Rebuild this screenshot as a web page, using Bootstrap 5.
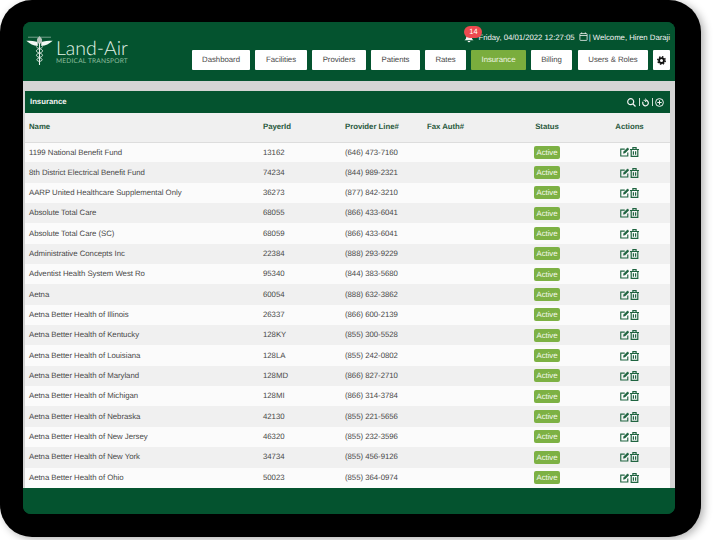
<!DOCTYPE html>
<html lang="en">
<head>
    <meta charset="UTF-8">
    <meta name="viewport" content="width=device-width, initial-scale=1.0">
    <title>Land-Air Insurance</title>
    <link href="https://cdn.jsdelivr.net/npm/bootstrap@5.3.2/dist/css/bootstrap.min.css" rel="stylesheet">
    <style>
        html, body {
            height: 540px;
            overflow: hidden;
            background: #fff;
        }
        body {
            font-family: "Liberation Sans", Arial, sans-serif;
            font-size: 7.8px;
            letter-spacing: -.03px;
            text-rendering: geometricPrecision;
            color: #484848;
        }
        .tablet-frame {
            width: 701px;
            height: 537px;
            padding: 22px 26px 23px 23px;
            background: #000;
            border-radius: 32px;
            box-shadow: 3px 2px 8px rgba(0,0,0,.3);
        }
        .tablet-screen {
            height: 492px;
            border-radius: 8px;
            overflow: hidden;
            background: #04532f;
        }
        .top-head {
            height: 59px;
            padding: 0 5px 0 3px;
            background: #04532f;
        }
        .logo-box {
            width: 165px;
            padding-top: 13px;
        }
        .logo-text {
            margin-left: 3px;
            padding-top: 5px;
        }
        .logo-word {
            font-family: Lato, "Liberation Sans", sans-serif;
            font-weight: 300;
            font-size: 19.5px;
            line-height: 17px;
            letter-spacing: 0;
            color: #e3f5ea;
        }
        .logo-sub {
            font-family: Lato, "Liberation Sans", sans-serif;
            font-size: 6.6px;
            line-height: 8px;
            color: #8fbf9f;
            letter-spacing: .2px;
            white-space: nowrap;
        }
        .head-side {
            width: 478px;
        }
        .head-info {
            height: 28px;
            padding-top: 10px;
            color: #f2f2f2;
            white-space: nowrap;
        }
        .welcome-text {
            margin-left: 1px;
        }
        .bell-wrap {
            width: 14px;
            height: 10px;
            margin-top: 1px;
        }
        .bell-count {
            position: absolute;
            left: 0;
            top: -7px;
            width: 18px;
            height: 12px;
            line-height: 12px;
            border-radius: 6px;
            background: #ec4a4f;
            color: #fff;
            font-size: 7.5px;
            text-align: center;
        }
        .menu-btn {
            height: 20px;
            line-height: 20px;
            padding: 0;
            border: 0;
            border-radius: 1px;
            background: #fff;
            color: #484848;
            text-align: center;
            text-decoration: none;
        }
        .menu-btn.is-current {
            background: #7aad3d;
            color: #eef5e4;
        }
        .work-area {
            height: 407px;
            padding: 10px 5px 0 2px;
            background: #d4d4d4;
            overflow: hidden;
        }
        .panel-bar {
            height: 22px;
            padding: 0 6px 0 5px;
            background: #04532f;
            color: #f2f2f2;
            font-weight: 700;
        }
        .panel-tools {
            gap: 2.5px;
        }
        .tool-sep {
            width: 1px;
            height: 8px;
            background: #cfe0d5;
        }
        .grid-table {
            width: 645px;
            table-layout: fixed;
            margin: 0;
        }
        .grid-table th {
            height: 29px;
            padding: 0 4px;
            background: #f0f0f0;
            color: #2a5a3e;
            font-weight: 700;
            border-bottom: 1px solid #ddd;
        }
        .grid-table td {
            height: 20.35px;
            padding: 0 4px;
            background: #fbfbfb;
            white-space: nowrap;
        }
        .grid-table tr:nth-child(even) td {
            background: #f0f0f0;
        }
        .state-tag {
            display: inline-block;
            width: 26px;
            height: 13px;
            line-height: 13px;
            border-radius: 2px;
            background: #7db144;
            color: #f3f8ea;
            text-align: center;
            vertical-align: middle;
        }
        .row-icons {
            gap: 1px;
        }
        .foot-bar {
            height: 26px;
            background: #04532f;
        }
        svg {
            display: block;
            flex: none;
        }
    </style>
</head>
<body>
<div class="tablet-frame">
    <div class="tablet-screen d-flex flex-column">

        <!-- Header -->
        <header class="top-head d-flex justify-content-between">
            <div class="logo-box d-flex">
                <svg width="27" height="30" viewBox="0 0 30 34" fill="none">
                    <path d="M2 2.500H28" stroke="#d8e6dc" stroke-width=".6"/>
                    <path d="M0 6.500C5 6.500 10 7 13 8V12.500C8 12 4 10 0 6.500Z" fill="#f2f8f4"/>
                    <path d="M30 6.500C25 6.500 20 7 17 8V12.500C22 12 26 10 30 6.500Z" fill="#f2f8f4"/>
                    <path d="M15 1L17.800 4.500V9.500H12.200V4.500Z" fill="#b9c6be"/>
                    <path d="M15 9V34" stroke="#e9f2ec" stroke-width="1.200"/>
                    <path d="M18.500 13C18.500 15.500 11.500 15.500 11.500 18C11.500 20.500 18.500 20.500 18.500 23C18.500 25.500 12 25.500 12 28C12 29.500 15 30 15 30" stroke="#dbe8df" stroke-width="1.100"/>
                    <path d="M11.500 13C11.500 15.500 18.500 15.500 18.500 18C18.500 20.500 11.500 20.500 11.500 23C11.500 25.500 18 25.500 18 28C18 29.500 15 30 15 30" stroke="#dbe8df" stroke-width="1.100"/>
                </svg>
                <div class="logo-text">
                    <div class="logo-word">Land-Air</div>
                    <div class="logo-sub">MEDICAL TRANSPORT</div>
                </div>
            </div>
            <div class="head-side">
                <div class="head-info d-flex justify-content-end align-items-start">
                    <span class="bell-wrap position-relative">
                        <svg width="10" height="10" viewBox="0 0 11 10" fill="#f2f2f2"><path d="M5.500 0C3.500 0 2.500 1.500 2.500 3.500C2.500 5.500 1.500 6.500 .5 7.500H10.500C9.500 6.500 8.500 5.500 8.500 3.500C8.500 1.500 7.500 0 5.500 0ZM4 8.300A1.500 1.500 0 0 0 7 8.300Z"/></svg>
                        <span class="bell-count">14</span>
                    </span>
                    <span>Friday, 04/01/2022 12:27:05</span>
                    <svg class="ms-1" width="9" height="9" viewBox="0 0 9 9" fill="none" stroke="#f2f2f2" stroke-width=".8"><rect x=".9" y="1.600" width="7.200" height="6.800" rx=".6"/><path d="M.9 3.500H8.100M2.700 .4V2M6.300 .4V2"/></svg>
                    <span class="welcome-text">| Welcome, Hiren Daraji</span>
                </div>
                <nav class="d-flex justify-content-end" id="menuRow"></nav>
            </div>
        </header>

        <!-- Insurance list -->
        <main class="work-area">
            <div class="panel-bar d-flex justify-content-between align-items-center">
                <span>Insurance</span>
                <div class="panel-tools d-flex align-items-center">
                    <svg width="9" height="9" viewBox="0 0 9 9" fill="none" stroke="#f2f2f2" stroke-width="1.200"><circle cx="3.700" cy="3.700" r="3"/><path d="M6 6L8.500 8.500"/></svg>
                    <span class="tool-sep"></span>
                    <svg width="7" height="9" viewBox="0 0 7 9" fill="none" stroke="#f2f2f2" stroke-width="1.200"><path d="M4.300 2.300A2.800 2.800 0 1 1 1 3.800"/><path d="M1.600 2.300H4.600M3 .6L4.800 2.300L3 4" stroke-width=".9"/></svg>
                    <span class="tool-sep"></span>
                    <svg width="9" height="9" viewBox="0 0 9 9" fill="none" stroke="#f2f2f2" stroke-width="1"><circle cx="4.500" cy="4.500" r="3.900"/><path d="M4.500 2.300V6.700M2.300 4.500H6.700"/></svg>
                </div>
            </div>
            <table class="grid-table">
                <colgroup>
                    <col style="width: 234px">
                    <col style="width: 82px">
                    <col style="width: 82px">
                    <col style="width: 82px">
                    <col style="width: 84px">
                    <col style="width: 81px">
                </colgroup>
                <thead>
                    <tr>
                        <th>Name</th>
                        <th>PayerId</th>
                        <th>Provider Line#</th>
                        <th>Fax Auth#</th>
                        <th class="text-center">Status</th>
                        <th class="text-center">Actions</th>
                    </tr>
                </thead>
                <tbody id="payerRows"></tbody>
            </table>
        </main>

        <footer class="foot-bar"></footer>
    </div>
</div>

<script src="https://cdn.jsdelivr.net/npm/bootstrap@5.3.2/dist/js/bootstrap.bundle.min.js"></script>
<script>
const MENU = [
    ['Dashboard', 58, 0], ['Facilities', 52, 5], ['Providers', 54, 5], ['Patients', 49, 5], ['Rates', 41, 5],
    ['Insurance', 55, 5], ['Billing', 41, 5], ['Users &amp; Roles', 70, 6]
];

const PAYERS = [
    ['1199 National Benefit Fund', '13162', '(646) 473-7160'],
    ['8th District Electrical Benefit Fund', '74234', '(844) 989-2321'],
    ['AARP United Healthcare Supplemental Only', '36273', '(877) 842-3210'],
    ['Absolute Total Care', '68055', '(866) 433-6041'],
    ['Absolute Total Care (SC)', '68059', '(866) 433-6041'],
    ['Administrative Concepts Inc', '22384', '(888) 293-9229'],
    ['Adventist Health System West Ro', '95340', '(844) 383-5680'],
    ['Aetna', '60054', '(888) 632-3862'],
    ['Aetna Better Health of Illinois', '26337', '(866) 600-2139'],
    ['Aetna Better Health of Kentucky', '128KY', '(855) 300-5528'],
    ['Aetna Better Health of Louisiana', '128LA', '(855) 242-0802'],
    ['Aetna Better Health of Maryland', '128MD', '(866) 827-2710'],
    ['Aetna Better Health of Michigan', '128MI', '(866) 314-3784'],
    ['Aetna Better Health of Nebraska', '42130', '(855) 221-5656'],
    ['Aetna Better Health of New Jersey', '46320', '(855) 232-3596'],
    ['Aetna Better Health of New York', '34734', '(855) 456-9126'],
    ['Aetna Better Health of Ohio', '50023', '(855) 364-0974']
];

const ICON_EDIT = `<svg width="9.500" height="10" viewBox="0 0 10 10" fill="none" stroke="#1f6440" stroke-width="1.200"><path d="M8.200 5.500V9.200H.8V2H5"/><path d="M3.600 6.400L4 4.600L8 .6L9.400 2L5.400 6Z" fill="#1f6440" stroke-width=".5"/></svg>`;
const ICON_TRASH = `<svg width="9" height="10" viewBox="0 0 9 10" fill="none" stroke="#1f6440" stroke-width="1.200"><path d="M0 2.500H9M2.900 2.300V.7H6.100V2.300M1.200 2.500V9.300H7.800V2.500M3.400 4.300V7.800M5.600 4.300V7.800"/></svg>`;

const menuRow = document.getElementById('menuRow');
menuRow.innerHTML = MENU.map(([label, width, gap]) =>
    `<a class="menu-btn ${label === 'Insurance' ? 'is-current' : ''}" href="#" style="width:${width}px;margin-left:${gap}px">${label}</a>`
).join('') + `<a class="menu-btn d-flex align-items-center justify-content-center" href="#" style="width:17px;margin-left:5px">
    <svg width="9" height="9" viewBox="0 0 24 24" fill="none" stroke="#111"><circle cx="12" cy="12" r="10" stroke-width="4" stroke-dasharray="3.900 3.950"/><circle cx="12" cy="12" r="6.500" stroke-width="5"/></svg>
</a>`;

document.getElementById('payerRows').innerHTML = PAYERS.map(([name, id, phone]) => `
    <tr>
        <td>${name}</td>
        <td>${id}</td>
        <td>${phone}</td>
        <td></td>
        <td class="text-center"><span class="state-tag">Active</span></td>
        <td><div class="row-icons d-flex justify-content-center">${ICON_EDIT}${ICON_TRASH}</div></td>
    </tr>`).join('');
</script>
</body>
</html>
